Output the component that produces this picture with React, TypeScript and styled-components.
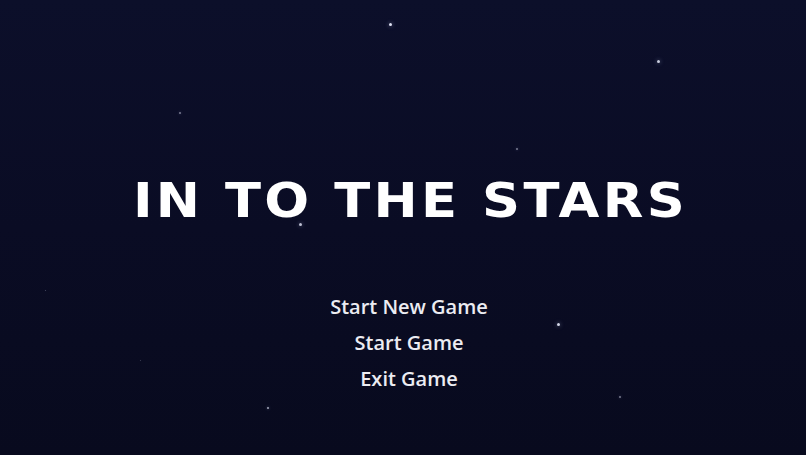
import React from 'react';
import styled, { createGlobalStyle } from 'styled-components';

const GlobalStyle = createGlobalStyle`
  html, body {
    margin: 0;
    padding: 0;
    background: #0a0c23;
  }
`;

interface Star {
    x: number;
    y: number;
    size: number;
    alpha: number;
}

// Star positions as they sit on the screen
const stars: Star[] = [
    { x: 390, y: 24, size: 3, alpha: 0.95 },
    { x: 658, y: 61, size: 3, alpha: 0.85 },
    { x: 180, y: 113, size: 2, alpha: 0.5 },
    { x: 517, y: 149, size: 2, alpha: 0.5 },
    { x: 300, y: 224, size: 3, alpha: 0.8 },
    { x: 558, y: 324, size: 3, alpha: 0.9 },
    { x: 268, y: 408, size: 2, alpha: 0.7 },
    { x: 620, y: 397, size: 2, alpha: 0.5 },
    { x: 45, y: 290, size: 1, alpha: 0.3 },
    { x: 140, y: 360, size: 1, alpha: 0.25 },
];

const Screen = styled.div`
  position: relative;
  width: 806px;
  height: 455px;
  box-sizing: border-box;
  padding-left: 12px;
  overflow: hidden;
  background: linear-gradient(180deg, #0c0f2a 0%, #0a0c24 50%, #080a1e 100%);
  display: flex;
  flex-direction: column;
  align-items: center;
`;

const StarDot = styled.span<{ $size: number; $alpha: number }>`
  position: absolute;
  width: ${p => p.$size}px;
  height: ${p => p.$size}px;
  border-radius: 50%;
  background: rgba(235, 238, 255, ${p => p.$alpha});
  box-shadow: 0 0 ${p => p.$size + 1}px rgba(200, 210, 255, ${p => p.$alpha * 0.6});
`;

const Title = styled.h1`
  margin: 170px 0 0 0;
  padding-left: 3px;
  font-family: "DejaVu Sans", sans-serif;
  font-weight: bold;
  font-size: 48px;
  line-height: 60px;
  letter-spacing: 3px;
  color: #ffffff;
  white-space: nowrap;
  position: relative;
  transform: scaleX(1.1);
`;

const Menu = styled.nav`
  margin-top: 64px;
  display: flex;
  flex-direction: column;
  align-items: center;
  gap: 11px;
  position: relative;
`;

const MenuItem = styled.button`
  background: none;
  border: none;
  padding: 0;
  font-family: "Open Sans", sans-serif;
  font-weight: 600;
  font-size: 20px;
  line-height: 25px;
  color: #ececf2;
  cursor: pointer;
`;

export default function App() {
    return (
        <>
            <GlobalStyle />
            <Screen>
                {stars.map((s, i) => (
                    <StarDot
                        key={i}
                        $size={s.size}
                        $alpha={s.alpha}
                        style={{ left: s.x - s.size / 2, top: s.y - s.size / 2 }}
                    />
                ))}
                <Title>IN TO THE STARS</Title>
                <Menu>
                    <MenuItem>Start New Game</MenuItem>
                    <MenuItem>Start Game</MenuItem>
                    <MenuItem>Exit Game</MenuItem>
                </Menu>
            </Screen>
        </>
    );
}
